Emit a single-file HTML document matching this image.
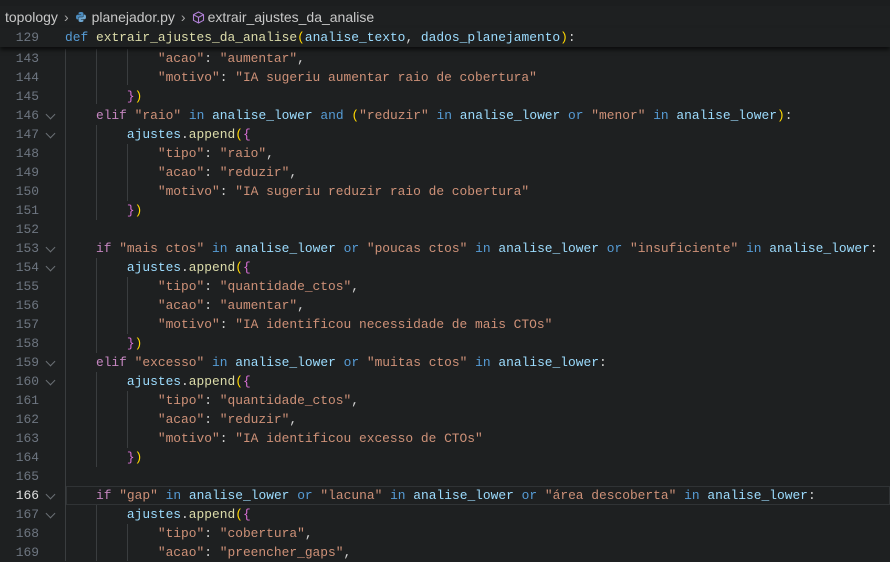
<!DOCTYPE html>
<html><head><meta charset="utf-8"><style>
*{margin:0;padding:0;box-sizing:border-box}
body{width:890px;height:560px;overflow:hidden;background:#1e2021;font-family:"Liberation Mono",monospace;position:relative}
.topbar{position:absolute;left:0;top:0;width:890px;height:6px;background:#1c1e1f}
.bc{position:absolute;left:0;top:6px;height:22px;width:890px;font-family:"Liberation Sans",sans-serif;font-size:14px;color:#c8c8c8;line-height:22px;padding-left:5px;white-space:nowrap}
.bc .sep{color:#aaa;margin:0 6px}
.wrap{position:absolute;left:0;top:1px;width:890px;height:560px}
.row{position:absolute;left:0;height:19px;width:890px;line-height:19px;font-size:12.9px;white-space:pre}
.ln{position:absolute;left:0;width:39px;text-align:right;color:#6e7681;font-size:12.9px}
.cur .ln{color:#e0e0e0}
.chev{position:absolute;left:47px;top:5px;width:7px;height:7px;border-right:1px solid #6a6f74;border-bottom:1px solid #6a6f74;transform:rotate(45deg)}
.code{position:absolute;left:65px;color:#d4d4d4}
.sticky{background:#1e2021;box-shadow:0 3px 4px rgba(0,0,0,.6);z-index:5}
.k{color:#569cd6}.f{color:#dcdcaa}.p{color:#9cdcfe}.s{color:#ce9178}.c{color:#c586c0}.v{color:#9cdcfe}
.b1{color:#ffd700}.b2{color:#da70d6}
.g{position:absolute;width:1px;background:#3a3d3f}
.curline{position:absolute;left:66px;width:824px;height:19px;border:1px solid #303335}
</style></head><body>
<div class="topbar"></div>
<div class="bc">topology<span class="sep">›</span><svg width="12" height="12" viewBox="0 0 12 12" style="vertical-align:-1px;margin-right:5px"><path d="M6 1C3.5 1 3.6 2 3.6 2v1.2h2.5v.5H2.6S1 3.5 1 6s1.4 2.4 1.4 2.4h.9V7.2s0-1.4 1.4-1.4h2.4s1.3 0 1.3-1.3V2.3S8.6 1 6 1z" fill="#4b8bbe"/><path d="M6 11c2.5 0 2.4-1 2.4-1V8.8H5.9v-.5h3.5S11 8.5 11 6 9.6 3.6 9.6 3.6h-.9v1.2s0 1.4-1.4 1.4H4.9s-1.3 0-1.3 1.3v2.2S3.4 11 6 11z" fill="#6ea6d0"/></svg>planejador.py<span class="sep">›</span><svg width="13" height="13" viewBox="0 0 13 13" style="vertical-align:-2px;margin-right:3px"><path d="M6.5 1 11.5 3.7v5.6L6.5 12 1.5 9.3V3.7z M1.5 3.7 6.5 6.4 11.5 3.7 M6.5 6.4V12" fill="none" stroke="#b180d7" stroke-width="1.1"/></svg>extrair_ajustes_da_analise</div>
<div class="wrap">
<div class="g" style="left:65px;top:48px;height:512px"></div>
<div class="g" style="left:96px;top:48px;height:55px"></div>
<div class="g" style="left:96px;top:124px;height:95px"></div>
<div class="g" style="left:127px;top:143px;height:57px"></div>
<div class="g" style="left:96px;top:257px;height:95px"></div>
<div class="g" style="left:127px;top:276px;height:57px"></div>
<div class="g" style="left:96px;top:371px;height:95px"></div>
<div class="g" style="left:127px;top:390px;height:57px"></div>
<div class="g" style="left:96px;top:504px;height:56px"></div>
<div class="g" style="left:127px;top:523px;height:37px"></div>
<div class="g" style="left:127px;top:48px;height:36px"></div>

<div class="row sticky" style="top:27px"><span class="ln">129</span><span class="code"><span class="k">def</span> <span class="f">extrair_ajustes_da_analise</span><span class="b1">(</span><span class="p">analise_texto</span>, <span class="p">dados_planejamento</span><span class="b1">)</span>:</span></div>

<div class="curline" style="top:485px"></div>

<div class="row" style="top:48px"><span class="ln">143</span><span class="code">            <span class="s">"acao"</span>: <span class="s">"aumentar"</span>,</span></div>
<div class="row" style="top:67px"><span class="ln">144</span><span class="code">            <span class="s">"motivo"</span>: <span class="s">"IA sugeriu aumentar raio de cobertura"</span></span></div>
<div class="row" style="top:86px"><span class="ln">145</span><span class="code">        <span class="b2">}</span><span class="b1">)</span></span></div>
<div class="row" style="top:105px"><span class="ln">146</span><span class="chev"></span><span class="code">    <span class="c">elif</span> <span class="s">"raio"</span> <span class="k">in</span> <span class="v">analise_lower</span> <span class="k">and</span> <span class="b1">(</span><span class="s">"reduzir"</span> <span class="k">in</span> <span class="v">analise_lower</span> <span class="k">or</span> <span class="s">"menor"</span> <span class="k">in</span> <span class="v">analise_lower</span><span class="b1">)</span>:</span></div>
<div class="row" style="top:124px"><span class="ln">147</span><span class="chev"></span><span class="code">        <span class="v">ajustes</span>.<span class="f">append</span><span class="b1">(</span><span class="b2">{</span></span></div>
<div class="row" style="top:143px"><span class="ln">148</span><span class="code">            <span class="s">"tipo"</span>: <span class="s">"raio"</span>,</span></div>
<div class="row" style="top:162px"><span class="ln">149</span><span class="code">            <span class="s">"acao"</span>: <span class="s">"reduzir"</span>,</span></div>
<div class="row" style="top:181px"><span class="ln">150</span><span class="code">            <span class="s">"motivo"</span>: <span class="s">"IA sugeriu reduzir raio de cobertura"</span></span></div>
<div class="row" style="top:200px"><span class="ln">151</span><span class="code">        <span class="b2">}</span><span class="b1">)</span></span></div>
<div class="row" style="top:219px"><span class="ln">152</span></div>
<div class="row" style="top:238px"><span class="ln">153</span><span class="chev"></span><span class="code">    <span class="c">if</span> <span class="s">"mais ctos"</span> <span class="k">in</span> <span class="v">analise_lower</span> <span class="k">or</span> <span class="s">"poucas ctos"</span> <span class="k">in</span> <span class="v">analise_lower</span> <span class="k">or</span> <span class="s">"insuficiente"</span> <span class="k">in</span> <span class="v">analise_lower</span>:</span></div>
<div class="row" style="top:257px"><span class="ln">154</span><span class="chev"></span><span class="code">        <span class="v">ajustes</span>.<span class="f">append</span><span class="b1">(</span><span class="b2">{</span></span></div>
<div class="row" style="top:276px"><span class="ln">155</span><span class="code">            <span class="s">"tipo"</span>: <span class="s">"quantidade_ctos"</span>,</span></div>
<div class="row" style="top:295px"><span class="ln">156</span><span class="code">            <span class="s">"acao"</span>: <span class="s">"aumentar"</span>,</span></div>
<div class="row" style="top:314px"><span class="ln">157</span><span class="code">            <span class="s">"motivo"</span>: <span class="s">"IA identificou necessidade de mais CTOs"</span></span></div>
<div class="row" style="top:333px"><span class="ln">158</span><span class="code">        <span class="b2">}</span><span class="b1">)</span></span></div>
<div class="row" style="top:352px"><span class="ln">159</span><span class="chev"></span><span class="code">    <span class="c">elif</span> <span class="s">"excesso"</span> <span class="k">in</span> <span class="v">analise_lower</span> <span class="k">or</span> <span class="s">"muitas ctos"</span> <span class="k">in</span> <span class="v">analise_lower</span>:</span></div>
<div class="row" style="top:371px"><span class="ln">160</span><span class="chev"></span><span class="code">        <span class="v">ajustes</span>.<span class="f">append</span><span class="b1">(</span><span class="b2">{</span></span></div>
<div class="row" style="top:390px"><span class="ln">161</span><span class="code">            <span class="s">"tipo"</span>: <span class="s">"quantidade_ctos"</span>,</span></div>
<div class="row" style="top:409px"><span class="ln">162</span><span class="code">            <span class="s">"acao"</span>: <span class="s">"reduzir"</span>,</span></div>
<div class="row" style="top:428px"><span class="ln">163</span><span class="code">            <span class="s">"motivo"</span>: <span class="s">"IA identificou excesso de CTOs"</span></span></div>
<div class="row" style="top:447px"><span class="ln">164</span><span class="code">        <span class="b2">}</span><span class="b1">)</span></span></div>
<div class="row" style="top:466px"><span class="ln">165</span></div>
<div class="row cur" style="top:485px"><span class="ln">166</span><span class="chev"></span><span class="code">    <span class="c">if</span> <span class="s">"gap"</span> <span class="k">in</span> <span class="v">analise_lower</span> <span class="k">or</span> <span class="s">"lacuna"</span> <span class="k">in</span> <span class="v">analise_lower</span> <span class="k">or</span> <span class="s">"área descoberta"</span> <span class="k">in</span> <span class="v">analise_lower</span>:</span></div>
<div class="row" style="top:504px"><span class="ln">167</span><span class="chev"></span><span class="code">        <span class="v">ajustes</span>.<span class="f">append</span><span class="b1">(</span><span class="b2">{</span></span></div>
<div class="row" style="top:523px"><span class="ln">168</span><span class="code">            <span class="s">"tipo"</span>: <span class="s">"cobertura"</span>,</span></div>
<div class="row" style="top:542px"><span class="ln">169</span><span class="code">            <span class="s">"acao"</span>: <span class="s">"preencher_gaps"</span>,</span></div>
</div>
</body></html>
